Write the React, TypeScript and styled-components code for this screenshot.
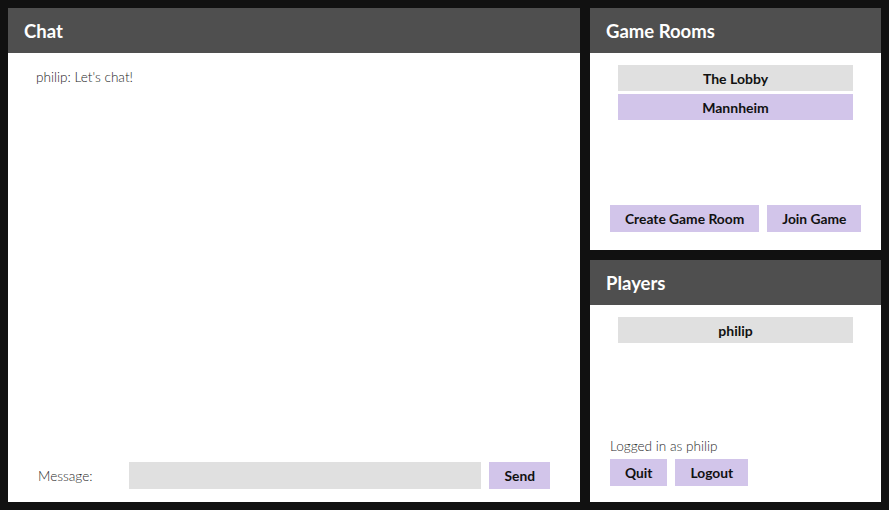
import styled, { createGlobalStyle } from "styled-components";

const GlobalStyle = createGlobalStyle`
  html, body {
    margin: 0;
    padding: 0;
    background: #111111;
    font-family: Lato, "Open Sans", sans-serif;
  }
`;

const rooms = [
  { name: "The Lobby", active: false },
  { name: "Mannheim", active: true },
];

const players = ["philip"];

const App = () => {
  return (
    <Page>
      <GlobalStyle />
      <ChatPanel>
        <Header>Chat</Header>
        <ChatBody>
          <Messages>
            <Message>philip: Let's chat!</Message>
          </Messages>
          <MessageForm>
            <Label>Message:</Label>
            <Input />
            <Button>Send</Button>
          </MessageForm>
        </ChatBody>
      </ChatPanel>
      <Sidebar>
        <Panel>
          <Header>Game Rooms</Header>
          <PanelBody bottom={18}>
            <List>
              {rooms.map((room) => (
                <ListItem key={room.name} active={room.active}>
                  {room.name}
                </ListItem>
              ))}
            </List>
            <Actions>
              <Button>Create Game Room</Button>
              <Button>Join Game</Button>
            </Actions>
          </PanelBody>
        </Panel>
        <Panel>
          <Header>Players</Header>
          <PanelBody bottom={16}>
            <List>
              {players.map((p) => (
                <ListItem key={p}>{p}</ListItem>
              ))}
            </List>
            <Status>Logged in as philip</Status>
            <Actions>
              <Button>Quit</Button>
              <Button>Logout</Button>
            </Actions>
          </PanelBody>
        </Panel>
      </Sidebar>
    </Page>
  );
};

const Page = styled.div`
  display: flex;
  gap: 10px;
  padding: 8px;
  height: 510px;
  box-sizing: border-box;
`;

const ChatPanel = styled.section`
  flex: 1;
  display: flex;
  flex-direction: column;
  background: #ffffff;
`;

const Sidebar = styled.div`
  width: 291px;
  display: flex;
  flex-direction: column;
  gap: 10px;
`;

const Panel = styled.section`
  flex: 1;
  display: flex;
  flex-direction: column;
  background: #ffffff;
`;

const Header = styled.h2`
  margin: 0;
  height: 45px;
  flex-shrink: 0;
  display: flex;
  align-items: center;
  padding: 0 16px;
  background: #4f4f4f;
  color: #ffffff;
  font-size: 18.5px;
  font-weight: 700;
`;

const ChatBody = styled.div`
  flex: 1;
  display: flex;
  flex-direction: column;
  padding: 15px 30px 13px 28px;
`;

const Messages = styled.div`
  flex: 1;
`;

const Message = styled.p`
  margin: 0;
  font-size: 13.6px;
  font-weight: 300;
  color: #1e1e1e;
  line-height: 18px;
`;

const MessageForm = styled.div`
  display: flex;
  align-items: center;
  gap: 8px;
`;

const Label = styled.span`
  width: 83px;
  padding-left: 2px;
  font-size: 13.6px;
  font-weight: 300;
  color: #2a2a2a;
`;

const Input = styled.div`
  flex: 1;
  height: 27px;
  background: #e0e0e0;
`;

const Button = styled.button`
  height: 27px;
  padding: 0 15px;
  border: none;
  white-space: nowrap;
  background: #d2c5ea;
  color: #111111;
  font-family: Lato, sans-serif;
  font-size: 13.8px;
  font-weight: 700;
`;

const PanelBody = styled.div<{ bottom: number }>`
  flex: 1;
  display: flex;
  flex-direction: column;
  padding: 12px 20px ${({ bottom }) => bottom}px;
`;

const List = styled.div`
  flex: 1;
  display: flex;
  flex-direction: column;
  gap: 3px;
  margin: 0 8px;
`;

const ListItem = styled.div<{ active?: boolean }>`
  height: 26px;
  display: flex;
  align-items: center;
  justify-content: center;
  background: ${({ active }) => (active ? "#d2c5ea" : "#e0e0e0")};
  font-size: 14px;
  font-weight: 700;
  color: #111111;
`;

const Actions = styled.div`
  display: flex;
  gap: 8px;
`;

const Status = styled.div`
  font-size: 13.6px;
  font-weight: 300;
  color: #2a2a2a;
  margin-bottom: 5px;
`;

export default App;
